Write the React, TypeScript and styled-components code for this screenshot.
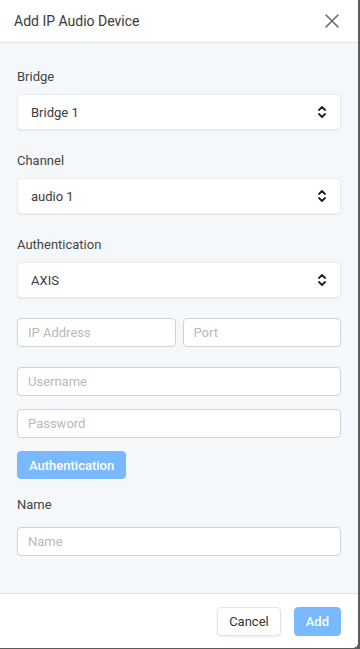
import styled, { createGlobalStyle } from 'styled-components';

const GlobalStyle = createGlobalStyle`
    html, body {
        margin: 0;
        padding: 0;
        background: #5b5b5b;
        font-family: Roboto, "Liberation Sans", sans-serif;
    }
    * { box-sizing: border-box; }
`

const Modal = styled.div`
    width: 358px;
    height: 648px;
    background: #fff;
    border-bottom-right-radius: 5px;
    display: flex;
    flex-direction: column;
    overflow: hidden;
`

const Header = styled.div`
    height: 43px;
    display: flex;
    align-items: center;
    justify-content: space-between;
    padding: 0 18px 0 14px;
    border-bottom: 1px solid #dde3e8;
    flex-shrink: 0;
`

const Title = styled.h1`
    margin: 0;
    font-size: 14px;
    font-weight: 400;
    color: #3a3a3a;
`

const CloseButton = styled.button`
    border: none;
    background: none;
    padding: 0;
    width: 16px;
    height: 16px;
    display: flex;
    cursor: pointer;
`

const Body = styled.div`
    flex: 1;
    background: #f5f8fb;
    padding: 26px 17px 0 17px;
    display: flex;
    flex-direction: column;
`

const Label = styled.label<{ $gap?: number }>`
    display: block;
    font-size: 13px;
    line-height: 16px;
    color: #444;
    margin-bottom: ${p => p.$gap ?? 9}px;
`

const SelectBox = styled.div`
    height: 36px;
    background: #fff;
    border: 1px solid #e8ecef;
    border-radius: 4px;
    box-shadow: 0 1px 2px rgba(0, 0, 0, 0.06);
    display: flex;
    align-items: center;
    justify-content: space-between;
    padding: 0 13px 0 13px;
    font-size: 13px;
    color: #3a3a3a;
    margin-bottom: 23px;
`

const Input = styled.input<{ $mb?: number }>`
    display: block;
    width: 100%;
    height: 29px;
    border: 1px solid #cfd3d6;
    border-radius: 4px;
    background: #fff;
    padding: 0 10px;
    font-family: Roboto, "Liberation Sans", sans-serif;
    font-size: 13px;
    color: #333;
    margin-bottom: ${p => p.$mb ?? 0}px;
    outline: none;
    &::placeholder { color: #b9b9b9; }
`

const Row = styled.div`
    display: grid;
    grid-template-columns: 1fr 1fr;
    gap: 7px;
    margin-top: -3px;
    margin-bottom: 20px;
`

const Button = styled.button<{ $primary?: boolean }>`
    height: 29px;
    border-radius: 4px;
    font-family: Roboto, "Liberation Sans", sans-serif;
    font-size: 13px;
    cursor: pointer;
    padding: 0 11px;
    border: 1px solid ${p => (p.$primary ? '#78b9ff' : '#e2e5e8')};
    background: ${p => (p.$primary ? '#78b9ff' : '#fff')};
    color: ${p => (p.$primary ? '#fff' : '#333')};
    font-weight: ${p => (p.$primary ? 500 : 400)};
    box-shadow: ${p => (p.$primary ? 'none' : '0 1px 2px rgba(0,0,0,0.08)')};
`

const AuthButton = styled(Button)`
    align-self: flex-start;
    height: 28px;
    padding: 0 11px;
    margin-bottom: 18px;
`

const Footer = styled.div`
    height: 55px;
    border-top: 1px solid #dde3e8;
    display: flex;
    align-items: center;
    justify-content: flex-end;
    gap: 13px;
    padding: 0 17px 0 0;
    flex-shrink: 0;
`

const Chevrons = () => (
    <svg width="10" height="16" viewBox="0 0 10 16" fill="none" stroke="#222" strokeWidth="1.8" strokeLinecap="round" strokeLinejoin="round">
        <path d="M2 6 L5 3 L8 6" />
        <path d="M2 10 L5 13 L8 10" />
    </svg>
)

const Select = ({ value }: { value: string }) => (
    <SelectBox>
        <span>{value}</span>
        <Chevrons />
    </SelectBox>
)

const App = () => {
    return (
        <>
            <GlobalStyle />
            <Modal>
                <Header>
                    <Title>Add IP Audio Device</Title>
                    <CloseButton aria-label="Close">
                        <svg width="16" height="16" viewBox="0 0 16 16" stroke="#666" strokeWidth="1.5" strokeLinecap="round">
                            <path d="M2 2 L14 14 M14 2 L2 14" />
                        </svg>
                    </CloseButton>
                </Header>
                <Body>
                    <Label>Bridge</Label>
                    <Select value="Bridge 1" />
                    <Label>Channel</Label>
                    <Select value="audio 1" />
                    <Label>Authentication</Label>
                    <Select value="AXIS" />
                    <Row>
                        <Input placeholder="IP Address" />
                        <Input placeholder="Port" />
                    </Row>
                    <Input placeholder="Username" $mb={13} />
                    <Input placeholder="Password" $mb={13} />
                    <AuthButton $primary>Authentication</AuthButton>
                    <Label $gap={14}>Name</Label>
                    <Input placeholder="Name" />
                </Body>
                <Footer>
                    <Button>Cancel</Button>
                    <Button $primary>Add</Button>
                </Footer>
            </Modal>
        </>
    )
}

export default App
